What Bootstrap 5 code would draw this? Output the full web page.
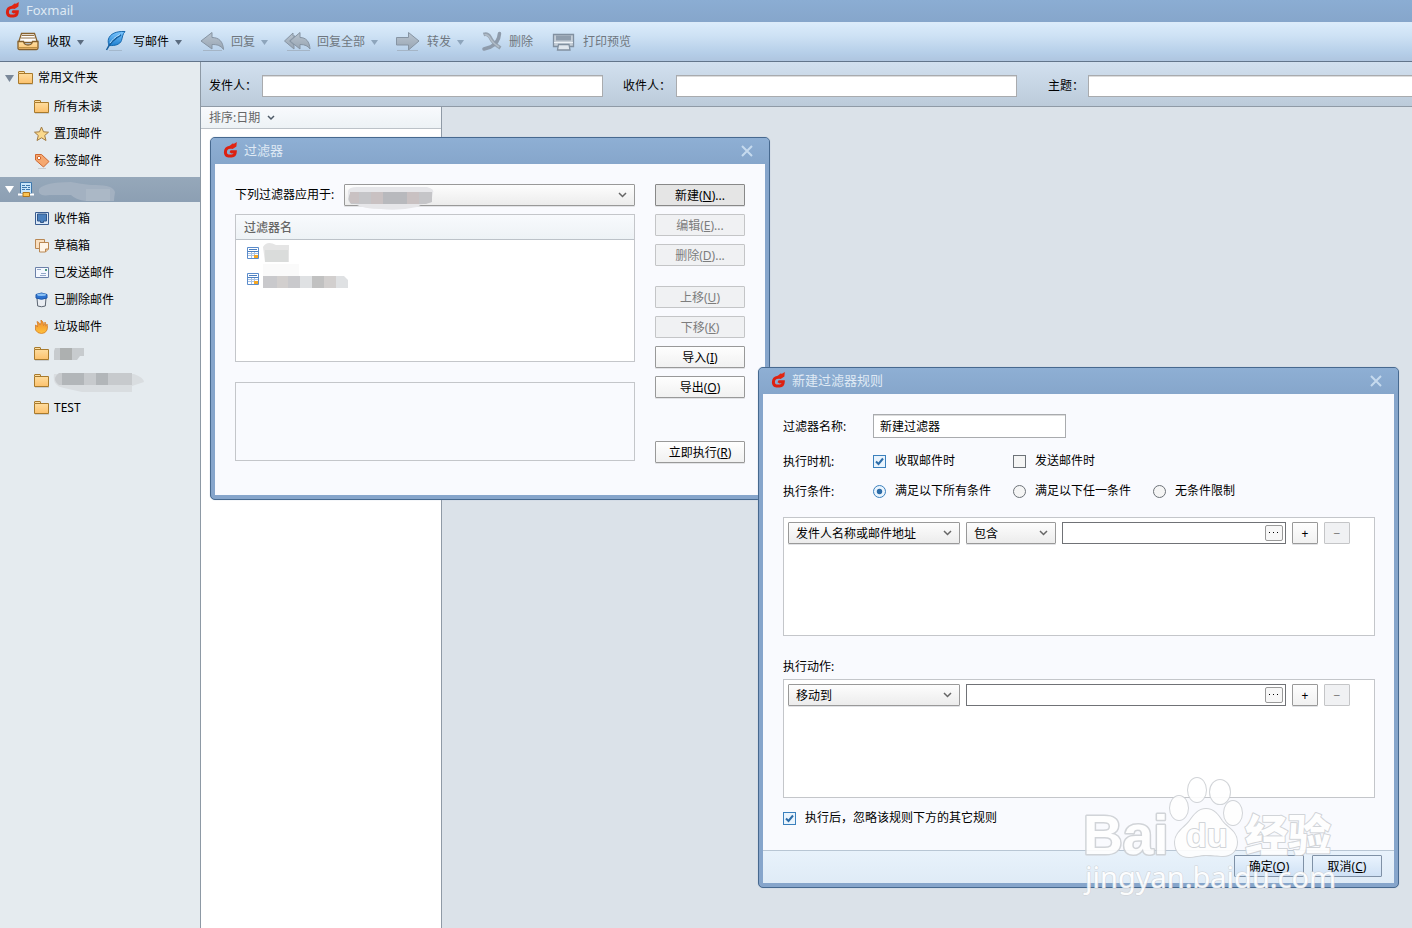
<!DOCTYPE html>
<html lang="zh-CN">
<head>
<meta charset="utf-8">
<meta name="viewport" content="width=device-width, initial-scale=1">
<title>Foxmail</title>
<link href="https://cdn.jsdelivr.net/npm/bootstrap@5.3.0/dist/css/bootstrap.min.css" rel="stylesheet">
<style>
body{font:12px/18px "Noto Sans","Noto Sans CJK SC",sans-serif;color:#000;background:#dbe2e9}
svg{display:block;overflow:visible;flex:none}
.app-title{height:22px;background:linear-gradient(#8badd3,#86a6cb);color:#dfe9f4;font-size:13px;line-height:20px;padding:0 5px 2px;gap:6px}
.tool-strip{height:40px;padding-left:16px;gap:18px;background:linear-gradient(#dbecfb,#cde1f4 35%,#b5cee8 80%,#afc5df);border-top:1px solid #dcebf9;border-bottom:1px solid #62758b}
.tool{border:0;background:none;padding:0;color:#000;white-space:nowrap}
.tool span{margin-left:7px}
.tool .tri{margin-left:6px}
.tool:disabled{color:#6f7780;opacity:1}
.tri{width:7px;height:5px;fill:#5b6c80}
.tool:disabled .tri{fill:#8ea5bc}
.side{width:201px;flex:none;padding-top:1px;background:#e5ebef;border-right:1px solid #8d99a5}
.side a{display:flex;align-items:center;color:#000;text-decoration:none}
.group-row{height:30px;padding-left:5px;gap:4px}
.group-row.active-row{height:25px;margin:3px 0;background:linear-gradient(#96a8ba,#8c9fb3)}
.leaf{height:27px;padding-left:34px;gap:4px}
.leaf svg{width:16px;height:16px}
.find-bar{height:45px;padding:4px 0 0 8px;background:linear-gradient(#d2e0ef,#bccbda);border-bottom:1px solid #8f9aa6;overflow:hidden}
.field{border:1px solid #a9abae;border-radius:0;background:#fff;box-shadow:inset 0 1px 0 #dcdcdc;padding:0 6px;font-size:12px;line-height:18px;min-height:0;height:22px;color:#000}
.find-bar .field{width:341px;flex:none}
.find-bar label{width:53px;flex:none}
.find-bar .field + label{margin-left:20px}
.find-bar .field + .short{width:40px;margin-left:31px}
.mail-list{width:241px;flex:none;background:#fff;border-right:1px solid #8f9aa6}
.sort-head{height:22px;width:100%;border:0;border-bottom:1px solid #bcc2c8;background:linear-gradient(#f8fafd,#edf2f5);color:#666;padding:0 0 0 8px;gap:7px}
.win{position:absolute;border:1px solid #47698f;border-radius:5px;background:#86a5cb;overflow:hidden;box-shadow:0 0 1px #9db0c5}
.win-filter{left:210px;top:137px;width:560px}
.win-rule{left:758px;top:367px;width:641px}
.win-head{height:26px;padding:0 16px 2px 12px;gap:6px;background:linear-gradient(#8eafd4,#86a6cb);color:#dfe9f4;font-size:13px}
.win-head button{border:0;background:none;padding:2px 0 0}
.win-body{margin:0 4px 4px;background:#f9fafe}
.filter-grid{padding:20px 20px 32px;gap:20px}
.act-col{width:90px;flex:none}
.key{height:22px;padding:2px 0 0;border:1px solid #999;border-radius:1px;background:linear-gradient(#fefefe,#f1f1f1);color:#000;font-size:12px;line-height:18px;box-shadow:0 1px 0 #e2e3e6}
.key.pressed{background:#e5e5e5;border-color:#888}
.key:disabled{color:#7d7d7d;border-color:#c4c5c7;background:#f0f1f3;box-shadow:none;opacity:1}
.key.ok{width:70px;border-color:#7f91a6;background:linear-gradient(#e9f3fd,#cfe1f5);box-shadow:none}
.next-group{margin-top:12px}
.pick{height:22px;min-height:0;border:1px solid #999;border-radius:1px;padding:2px 20px 0 7px;font-size:12px;line-height:18px;color:#000;background:url("data:image/svg+xml,%3Csvg xmlns='http://www.w3.org/2000/svg' width='9' height='6'%3E%3Cpath d='M1 1l3.500 3.500L8 1' fill='none' stroke='%23666' stroke-width='1.500'/%3E%3C/svg%3E") right 7px center/9px 6px no-repeat,linear-gradient(#fdfdfd,#ececec);box-shadow:0 1px 0 #e2e3e6}
.names{width:100%;background:#fff}
.names th{height:25px;padding:1px 8px 0;line-height:22px;color:#666;background:linear-gradient(#f8fafd,#edf2f5);box-shadow:inset 0 -1px 0 #bcc2c8;font-weight:500}
.names td{height:26px;padding:0 11px}
.frame{border:1px solid #c4c6ca}
.names-box{height:148px;background:#fff;margin-top:8px}
.note-box{height:79px;margin:20px 0 2px}
.rule-form{padding:20px 19px 23px 20px}
.lead-label{width:90px;flex:none;padding-top:2px}
.choice{width:140px;gap:9px}
.row-when{margin-top:13px}
.row-cond{margin-top:10px}
.row-cond + .rules{margin-top:16px}
.act-title{margin:22px 0 3px}
.row-last{margin-top:11px;gap:9px}
.form-check-input.tick{width:13px;height:13px;margin:0;border:1px solid #6d7278;background-color:#f5f5f5;flex:none;box-shadow:none}
.tick[type=checkbox]{border-radius:0}
.form-check-input.tick:checked{border-color:#3b80bd;background-color:#eaf4fd}
.tick[type=checkbox]:checked{background-image:url("data:image/svg+xml,%3Csvg xmlns='http://www.w3.org/2000/svg' viewBox='0 0 11 11'%3E%3Cpath d='M2 5.500l2.500 2.500L9 2.500' fill='none' stroke='%232d6ca8' stroke-width='2'/%3E%3C/svg%3E")!important}
.tick[type=radio]:checked{background-image:url("data:image/svg+xml,%3Csvg xmlns='http://www.w3.org/2000/svg' viewBox='0 0 11 11'%3E%3Ccircle cx='5.500' cy='5.500' r='2.700' fill='%232d6ca8'/%3E%3C/svg%3E")!important}
.rules{height:119px;padding:4px 24px 4px 4px;gap:6px;background:#fff}
.w-main{width:172px;flex:none}
.w-op{width:90px;flex:none}
.w-sign{width:26px;flex:none}
.entry{height:22px;border:1px solid #707276;background:#fff;padding-right:2px}
.entry input{border:0;outline:0;min-width:0;height:18px;background:none}
.dots{width:18px;height:16px;border:1px solid #999;border-radius:2px;background:#f7f7f7;padding:0}
.dots svg{margin:auto}
.win-foot{height:33px;padding:0 12px 2px;gap:8px;border-top:1px solid #b8c6d4;background:linear-gradient(#e8f2fb,#dfebf6)}
.stamp{position:absolute;left:1080px;top:770px;pointer-events:none}
.stamp text{font-family:"Liberation Sans",sans-serif;font-weight:700}
.stamp .cjk{font-family:"Noto Sans CJK SC",sans-serif;font-weight:900}
.stamp .site{font-family:"Noto Sans",sans-serif;font-weight:400}
.smudge{position:absolute;left:3px;top:3px}
</style>
</head>
<body>
<svg width="0" height="0" class="position-absolute">
<defs>
<linearGradient id="gold" x2="0" y2="1"><stop stop-color="#ffe2a8"/><stop offset="1" stop-color="#fcc16c"/></linearGradient>
<linearGradient id="steel" x2="0" y2="1"><stop stop-color="#b9c4cf"/><stop offset="1" stop-color="#98a5b3"/></linearGradient>
<linearGradient id="sky" x2="0" y2="1"><stop stop-color="#7cc6ff"/><stop offset="1" stop-color="#1f80d0"/></linearGradient>
<linearGradient id="fire" x2="0" y2="1"><stop stop-color="#ee8a2e"/><stop offset="1" stop-color="#ffc23c"/></linearGradient>
<symbol id="fox" viewBox="0 0 15 16"><path d="M10 5.300H7C4 5.600 2.400 7.500 2.400 10.300c0 2.600 1 3.600 3 3.600h3.200c2.400 0 3.600-1.400 3.700-4.200H8.500L7.800 11" fill="none" stroke="#dd2010" stroke-width="3"/><path d="M6 4.500L9.500 1.500l1.500.3L13.800 0l-.4 4.500L10 6.800z" fill="#e22512"/></symbol>
<symbol id="folder" viewBox="0 0 16 16"><path d="M.5 3.500V2q0-.5.500-.5h5q.5 0 .5.500v1.500h8v10H.5z" fill="url(#gold)" stroke="#a87a2c"/><path d="M1 3.500h6" stroke="#a87a2c"/><path d="M1 14.500h14" stroke="#c9cdd0"/></symbol>
<symbol id="tri" viewBox="0 0 7 5"><path d="M0 0h7L3.500 5z"/></symbol>
<symbol id="cross" viewBox="0 0 12 12"><path d="M1 1l10 10M11 1L1 11" stroke="#c6daee" stroke-width="2"/></symbol>
<symbol id="grid" viewBox="0 0 12 12"><path d="M.5.500h11v11H.5z" fill="#fff" stroke="#5b8ccb"/><path d="M2 2.500h8M1 4.500h10" stroke="#4b7fc0"/><path d="M1 6.500h10M1 8.500h10M4.500 5v6M7.500 5v6" stroke="#a8c2e4"/><path d="M7 8h4v3H7z" fill="#f5a623"/></symbol>
</defs>
</svg>

<div class="d-flex flex-column min-vh-100 position-relative overflow-hidden">
<header class="app-title d-flex align-items-center"><svg width="15" height="16"><use href="#fox"/></svg><span>Foxmail</span></header>

<nav class="tool-strip d-flex align-items-center" aria-label="工具栏">
<button class="tool d-flex align-items-center"><svg width="24" height="24" viewBox="0 0 24 24"><path d="M5.500 3.500h13l3 9h-19z" fill="#fff" stroke="#85602c" stroke-width="1.300"/><path d="M6 5.500h12M5 8h14" stroke="#94744a"/><path d="M2 11.500h5.500q.5 3.500 4.500 3.500t4.500-3.500H22V18q0 1.500-1.500 1.500h-17Q2 19.500 2 18z" fill="url(#gold)" stroke="#85602c" stroke-width="1.300"/><path d="M3 17.500h18" stroke="#bd9145"/></svg><span>收取</span><svg class="tri"><use href="#tri"/></svg></button>
<button class="tool d-flex align-items-center"><svg width="24" height="24" viewBox="0 0 24 24"><path d="M23 1.500C14 1 8 4 6.500 9c-.6 2-.3 4 .5 6.500C13 16 18 14.500 19.500 10.500c1-3 1-6.500 3.500-9z" fill="url(#sky)" stroke="#1769ae"/><path d="M19 5C13 8 8 13 4.500 20" fill="none" stroke="#175f9e" stroke-width="1.400"/><path d="M18 4.500C13 7 10 10 8 13" fill="none" stroke="#b9e2ff"/><path d="M7 20.500h13" stroke="#a4b8cc"/></svg><span>写邮件</span><svg class="tri"><use href="#tri"/></svg></button>
<button class="tool d-flex align-items-center" disabled><svg width="24" height="24" viewBox="0 0 24 24"><path d="M1 11L12 2.500v5c7 0 11 4 11.500 12-3-4-6-5-11.500-5V19z" fill="url(#steel)" stroke="#8694a3"/><path d="M3 20.500h19" stroke="#a5b5c6"/></svg><span>回复</span><svg class="tri"><use href="#tri"/></svg></button>
<button class="tool d-flex align-items-center" disabled><svg width="24" height="24" viewBox="0 0 24 24"><path d="M7 6V3l-8.500 8L8 19v-4L3.500 11 9 6z" fill="url(#steel)" stroke="#8694a3"/><path d="M4 11l10-8.500v5c6 0 9.500 4 10 11.500-2-3-5-4.500-10-4.500V19z" fill="url(#steel)" stroke="#8694a3"/><path d="M1 20.500h23" stroke="#a5b5c6"/></svg><span>回复全部</span><svg class="tri"><use href="#tri"/></svg></button>
<button class="tool d-flex align-items-center" disabled><svg width="24" height="24" viewBox="0 0 24 24"><path d="M.5 7.500h12V2.500L23 11l-10.500 9v-5H.5z" fill="url(#steel)" stroke="#8694a3"/><path d="M1 20.500h21" stroke="#a5b5c6"/></svg><span>转发</span><svg class="tri"><use href="#tri"/></svg></button>
<button class="tool d-flex align-items-center" disabled><svg width="20" height="24" viewBox="0 0 20 24"><path d="M1.500 4.500Q5.500 3 8 7q2.500 6 10.500 11" fill="none" stroke="#95a2b0" stroke-width="3.500"/><path d="M17.500 3.500c-.5 6-4 11-9 13.500L2 19" fill="none" stroke="#8e9bab" stroke-width="3.500" stroke-linecap="round"/><path d="M2.500 4.800Q6 4 8 8q2.500 5 9 9" fill="none" stroke="#b2bdc8" stroke-width="1.500"/></svg><span>删除</span></button>
<button class="tool d-flex align-items-center" disabled><svg width="25" height="24" viewBox="0 0 25 24"><path d="M2.500 4.500h20v12h-20z" fill="#c5ced7" stroke="#8190a0" stroke-width="1.300"/><path d="M5 5.500h15v5H5z" fill="#909ead"/><path d="M3 12.500h19" stroke="#eef3f8"/><path d="M7.500 14.500h10.500l1 5.500H6.500z" fill="#e0e7ee" stroke="#8190a0" stroke-width="1.300"/></svg><span>打印预览</span></button>
</nav>

<div class="d-flex flex-grow-1">
<aside class="side">
<a href="#" class="group-row"><svg width="9" height="7" viewBox="0 0 9 7" fill="#7a8899"><path d="M0 0h9L4.500 7z"/></svg><svg width="16" height="16"><use href="#folder"/></svg><span>常用文件夹</span></a>
<a href="#" class="leaf"><svg><use href="#folder"/></svg>所有未读</a>
<a href="#" class="leaf"><svg viewBox="0 0 16 16"><path d="M7.500 1l2 4.800 5 .4-3.800 3.300 1.300 5-4.500-2.700L3 14.500l1.300-5L.5 6.200l5-.4z" fill="#fbd98c" stroke="#a17c45"/></svg>置顶邮件</a>
<a href="#" class="leaf"><svg viewBox="0 0 16 16"><path d="M1.500 1.500h6l7.500 7-5.500 5.500-8-7z" fill="#f5a870" stroke="#cf6730"/><circle cx="5" cy="5" r="1.700" fill="#fff" stroke="#cf6730"/><path d="M4 15.500h8" stroke="#c8ccd0"/></svg>标签邮件</a>
<a href="#" class="group-row active-row" aria-label="账户"><svg width="9" height="7" viewBox="0 0 9 7" fill="#fff"><path d="M0 0h9L4.500 7z"/></svg><svg width="16" height="16" viewBox="0 0 16 16"><path d="M2.500.5h11v11h-11z" fill="#c9e6fa" stroke="#3f78ad"/><path d="M4 3.500h3m1 0h4M4 5.500h5m1 0h2M4 7.500h3m1 0h4" stroke="#3f78ad"/><path d="M0 12.500h16" stroke="#fff" stroke-width="2"/><path d="M5 10.500h6.500v4H5z" fill="#fbc453" stroke="#b0761e"/></svg><svg width="80" height="22" viewBox="0 0 80 22" fill="#a3b1c1"><path d="M1 10q6-7 32-7 10 2 20 3 22-1 24 7-1 6-1 9H48q-10-1-15-6H12Q-1 18 1 10z"/><path d="M48 10h24v12H48z" fill="#abb8c6"/></svg></a>
<a href="#" class="leaf"><svg viewBox="0 0 16 16"><path d="M1.500 1.500h13v12h-13z" fill="#dbe9f8" stroke="#3a5d91"/><path d="M3.500 3h9v7h-3v1.500h-3V10h-3z" fill="#4b80bd" stroke="#31578a"/></svg>收件箱</a>
<a href="#" class="leaf"><svg viewBox="0 0 16 16"><path d="M1.500 1.500h9v9h-9z" fill="#f8dfc0" stroke="#b98753"/><path d="M5.500 4.500h9V11l-3 3h-6z" fill="#fff5e8" stroke="#b98753"/><path d="M14.500 11h-3v3" fill="#e7bf91" stroke="#b98753"/></svg>草稿箱</a>
<a href="#" class="leaf"><svg viewBox="0 0 16 16"><path d="M1.500 2.500h13v10h-13z" fill="#f4f8ff" stroke="#6b80a8"/><path d="M3 4.500h4M7 8.500h5M6 10.500h6" stroke="#93a7c9"/><path d="M11 4h2v2h-2z" fill="#4c9a7d"/></svg>已发送邮件</a>
<a href="#" class="leaf"><svg viewBox="0 0 16 16"><path d="M3 6l.7 8q4 1.500 7.600 0L12 6z" fill="#e9edf2" stroke="#5b6571"/><path d="M2 2.500q5.500-3 11 0V6q-5.500 2.500-11 0z" fill="#2c72cf" stroke="#1e57a8"/><ellipse cx="7.500" cy="2.700" rx="4.500" ry="1.200" fill="#8cc2f5"/></svg>已删除邮件</a>
<a href="#" class="leaf"><svg viewBox="0 0 16 16"><path d="M1.500 6Q3 6.500 3.500 8 4 5 3 2.500 5.500 3 6 6 7.500 4 7 1q3 2 2.500 5.500Q11 5.500 11 3q1 1.500.7 4Q13 6.500 13 5q1 3 0 6-1.500 3.500-5.500 3.500T1.500 11z" fill="url(#fire)" stroke="#d47e28" stroke-width=".8"/></svg>垃圾邮件</a>
<a href="#" class="leaf" aria-label="文件夹"><svg><use href="#folder"/></svg><svg style="width:30px" viewBox="0 0 30 16"><path d="M1 2h29v8h-4l-3 4H0V5z" fill="#c7cbce"/><path d="M6 2h12v12H6z" fill="#adb0b0"/></svg></a>
<a href="#" class="leaf" aria-label="文件夹"><svg><use href="#folder"/></svg><svg style="width:90px" viewBox="0 0 90 16"><path d="M0 1h80q9 3 10 8l-12 4v6H28l-18-4q-12-2-10-14z" fill="#d9dde0"/><path d="M5 0h73v12H5q-8-6 0-12z" fill="#c7cacd"/><path d="M8 0h22v12H8zM42 0h12v12H42z" fill="#b2b6b9"/></svg></a>
<a href="#" class="leaf"><svg><use href="#folder"/></svg>TEST</a>
</aside>

<main class="d-flex flex-column flex-grow-1 overflow-hidden">
<form class="find-bar d-flex align-items-center">
<label for="from">发件人：</label><input id="from" class="field">
<label for="to">收件人：</label><input id="to" class="field">
<label for="subject" class="short">主题：</label><input id="subject" class="field">
</form>
<div class="d-flex flex-grow-1">
<section class="mail-list"><button class="sort-head d-flex align-items-center">排序:日期 <svg width="8" height="6" viewBox="0 0 8 6"><path d="M1 1l3 3 3-3" fill="none" stroke="#4d5966" stroke-width="1.500"/></svg></button></section>
</div>
</main>
</div>

<section class="win win-filter" role="dialog" aria-labelledby="filter-title">
<div class="win-head d-flex align-items-center"><svg width="15" height="16"><use href="#fox"/></svg><span id="filter-title">过滤器</span><button class="ms-auto" aria-label="关闭"><svg width="12" height="12"><use href="#cross"/></svg></button></div>
<div class="win-body filter-grid d-flex">
<div class="flex-grow-1">
<div class="d-flex align-items-center"><label for="account" class="flex-shrink-0" style="width:109px">下列过滤器应用于:</label>
<div class="position-relative flex-grow-1"><select id="account" class="form-select pick"><option></option></select>
<svg class="smudge" width="90" height="22" viewBox="0 0 90 22"><path d="M1 4Q2 0 10 0h70q8 2 6 6l-2 10q-8 0-14 4-18 4-36 2-18 0-26-5-8 0-7-6z" fill="#e6e6e9"/><path d="M4 5h81v10l-6 2H4q-5-5 0-12z" fill="#c5c5c8"/><path d="M3 5h9v11H3zM24 5h12v12H24zM60 5h12v12H60z" fill="#c9c1c2"/><path d="M36 5h24v12H36z" fill="#b8b9bd"/></svg></div></div>
<div class="frame names-box"><table class="names"><thead><tr><th scope="col">过滤器名</th></tr></thead><tbody>
<tr><td><div class="d-flex align-items-center gap-1"><svg width="12" height="12"><use href="#grid"/></svg><svg width="26" height="12" viewBox="0 0 26 12"><path d="M0 0q4-7 13-2h13v17H2z" fill="#e5e5e5"/><path d="M2 3h11v12H2zM13 3h12v12H13z" fill="#dadcdb"/></svg></div></td></tr>
<tr><td><div class="d-flex align-items-center gap-1"><svg width="12" height="12"><use href="#grid"/></svg><svg width="86" height="12" viewBox="0 0 86 12"><path d="M0-9h36V3H0z" fill="#fafafa"/><path d="M0 3h81l4 4v8H0z" fill="#dfe1e3"/><path d="M0 3h14v12H0zM25 3h12v12H25z" fill="#c9c9cc"/><path d="M14 3h11v12H14zM61 3h12v12H61z" fill="#d2cfce"/><path d="M49 3h12v12H49z" fill="#c1c1c1"/></svg></div></td></tr>
</tbody></table></div>
<div class="frame note-box"></div>
</div>
<div class="act-col d-flex flex-column gap-2">
<button class="btn key pressed">新建(<u>N</u>)...</button>
<button class="btn key" disabled>编辑(<u>E</u>)...</button>
<button class="btn key" disabled>删除(<u>D</u>)...</button>
<button class="btn key next-group" disabled>上移(<u>U</u>)</button>
<button class="btn key" disabled>下移(<u>K</u>)</button>
<button class="btn key">导入(<u>I</u>)</button>
<button class="btn key">导出(<u>O</u>)</button>
<button class="btn key mt-auto">立即执行(<u>R</u>)</button>
</div>
</div>
</section>

<section class="win win-rule" role="dialog" aria-labelledby="rule-title">
<div class="win-head d-flex align-items-center"><svg width="15" height="16"><use href="#fox"/></svg><span id="rule-title">新建过滤器规则</span><button class="ms-auto" aria-label="关闭"><svg width="12" height="12"><use href="#cross"/></svg></button></div>
<form class="win-body">
<div class="rule-form">
<div class="d-flex align-items-center"><label class="lead-label" for="rule-name">过滤器名称:</label><input id="rule-name" class="field" style="width:193px;height:24px" value="新建过滤器"></div>
<div class="d-flex align-items-center row-when"><span class="lead-label">执行时机:</span>
<label class="choice d-flex align-items-center"><input type="checkbox" class="form-check-input tick" checked>收取邮件时</label>
<label class="choice d-flex align-items-center"><input type="checkbox" class="form-check-input tick">发送邮件时</label></div>
<div class="d-flex align-items-center row-cond"><span class="lead-label">执行条件:</span>
<label class="choice d-flex align-items-center"><input type="radio" name="cond" class="form-check-input tick" checked>满足以下所有条件</label>
<label class="choice d-flex align-items-center"><input type="radio" name="cond" class="form-check-input tick">满足以下任一条件</label>
<label class="choice d-flex align-items-center"><input type="radio" name="cond" class="form-check-input tick">无条件限制</label></div>
<div class="frame rules d-flex">
<select class="form-select pick w-main" aria-label="字段"><option>发件人名称或邮件地址</option></select>
<select class="form-select pick w-op" aria-label="关系"><option>包含</option></select>
<div class="entry d-flex align-items-center flex-grow-1"><input class="flex-grow-1" aria-label="条件内容"><button type="button" class="dots" aria-label="选择"><svg width="12" height="2" viewBox="0 0 12 2"><path d="M1 0h1v1H1zM5 0h1v1H5zM9 0h1v1H9z"/></svg></button></div>
<button type="button" class="btn key w-sign">+</button><button type="button" class="btn key w-sign" disabled>−</button></div>
<div class="act-title">执行动作:</div>
<div class="frame rules d-flex">
<select class="form-select pick w-main" aria-label="动作"><option>移动到</option></select>
<div class="entry d-flex align-items-center flex-grow-1"><input class="flex-grow-1" aria-label="目标文件夹"><button type="button" class="dots" aria-label="选择"><svg width="12" height="2" viewBox="0 0 12 2"><path d="M1 0h1v1H1zM5 0h1v1H5zM9 0h1v1H9z"/></svg></button></div>
<button type="button" class="btn key w-sign">+</button><button type="button" class="btn key w-sign" disabled>−</button></div>
<label class="d-flex align-items-center row-last"><input type="checkbox" class="form-check-input tick" checked>执行后，忽略该规则下方的其它规则</label>
</div>
<div class="win-foot d-flex align-items-center justify-content-end"><button type="button" class="btn key ok">确定(<u>O</u>)</button><button type="button" class="btn key ok">取消(<u>C</u>)</button></div>
</form>
</section>

<svg class="stamp" width="260" height="130" viewBox="0 0 260 130" fill="#fff" stroke="#cdd0d4" stroke-width="2" stroke-linejoin="round"><g opacity=".9" paint-order="stroke">
<text x="3" y="84" font-size="55" stroke-width="3">Bai</text>
<ellipse cx="99" cy="38" rx="9" ry="12"/><ellipse cx="117" cy="20" rx="9" ry="12"/><ellipse cx="140" cy="22" rx="10" ry="12"/><ellipse cx="153" cy="43" rx="9" ry="12"/>
<path d="M126 39c8 0 12 6 16 12 5 7 15 10 15 21 0 9-6 14-14 14-6 0-10-1-17-1s-11 2-17 2c-9 0-14-6-14-15 0-9 9-14 14-20 5-7 9-13 17-13z"/>
<text x="106" y="77" font-size="34">du</text>
<text class="cjk" x="165" y="81" font-size="43">经验</text>
<text class="site" x="5" y="118" font-size="29" stroke-width="1">jingyan.baidu.com</text>
</g></svg>
</div>
<script src="https://cdn.jsdelivr.net/npm/bootstrap@5.3.0/dist/js/bootstrap.bundle.min.js"></script>
</body>
</html>
